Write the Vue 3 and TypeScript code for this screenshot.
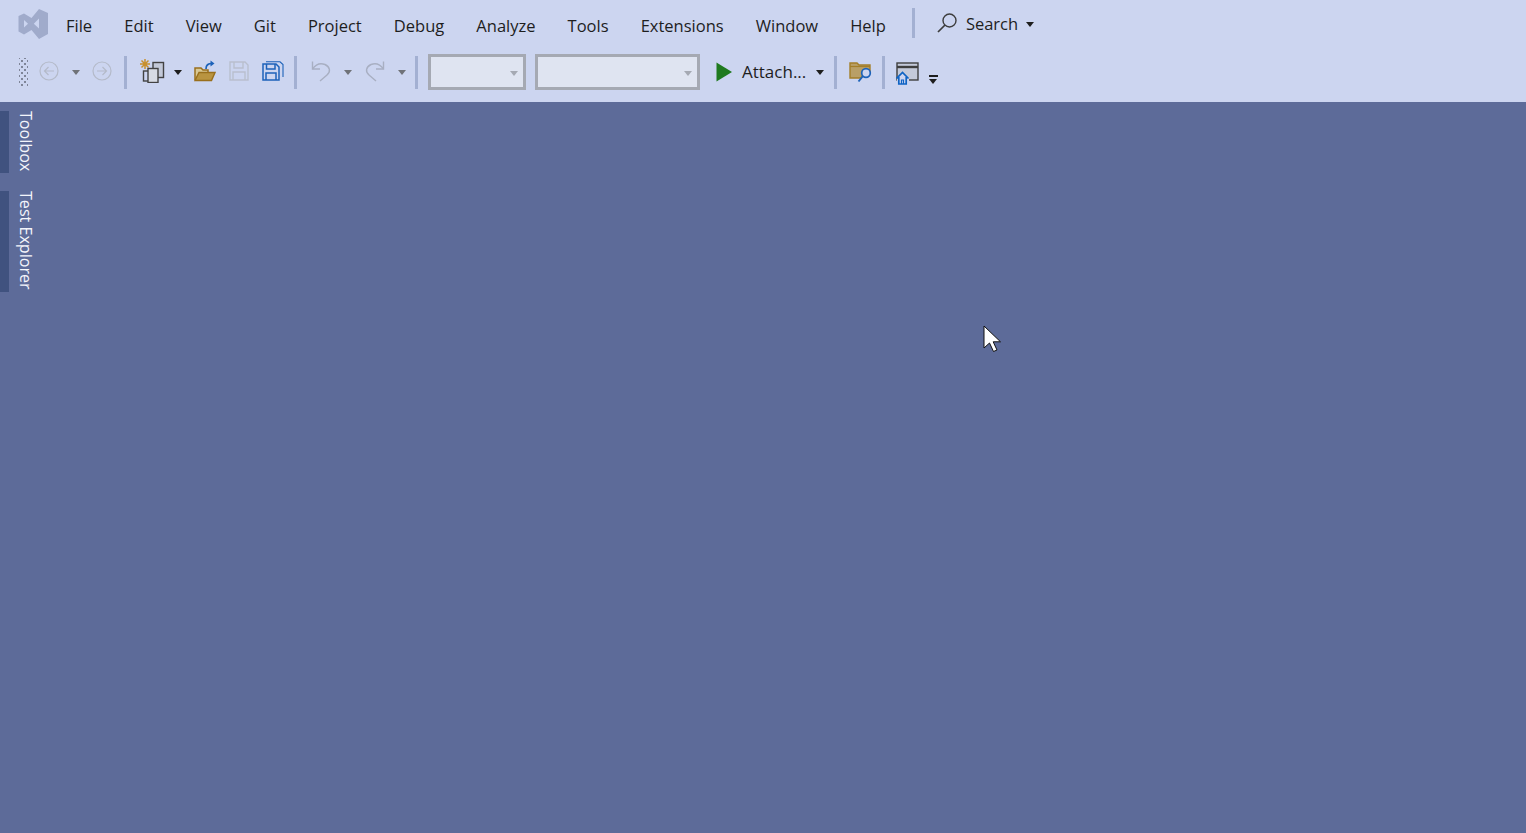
<script setup lang="ts">
const menuItems = ["File", "Edit", "View", "Git", "Project", "Debug", "Analyze", "Tools", "Extensions", "Window", "Help"];
const sideTabs = ["Toolbox", "Test Explorer"];
</script>

<template>
  <div class="shell">
    <header class="top">
      <div class="menu-row">
        <svg class="logo" width="32" height="32" viewBox="0 0 32 32">
          <path
            fill="#a0abcb"
            fill-rule="evenodd"
            d="M22 1 L31 5 V26 L22 31 L14.5 22 L7 26.500 L1.500 23.500 V8 L7 5.500 L14.5 10 Z M7 12 V19.500 L11 15.700 Z M22 10.500 L16.800 15.700 L22 20.500 Z"
          />
        </svg>
        <nav class="menu">
          <span v-for="item in menuItems" :key="item" class="menu-item">{{ item }}</span>
        </nav>
        <i class="sep menu-sep"></i>
        <svg class="search-icon" width="20" height="20" viewBox="0 0 20 20" fill="none">
          <circle cx="12.5" cy="7.500" r="6.500" stroke="#3d3d3d" stroke-width="1.400" />
          <path d="M8 12 L1 19" stroke="#3d3d3d" stroke-width="1.700" />
        </svg>
        <span class="search-label">Search</span>
        <i class="caret search-caret"></i>
      </div>

      <div class="tool-row">
        <div class="gripper"></div>

        <svg class="t-icon t-back" width="20" height="20" viewBox="0 0 20 20" fill="none" stroke="#b4bac9" stroke-width="1.200">
          <circle cx="10" cy="10" r="9" />
          <path d="M15 10 H5.500 M9.500 6 L5.500 10 L9.500 14" />
        </svg>
        <i class="caret caret-muted t-back-dd"></i>
        <svg class="t-icon t-fwd" width="20" height="20" viewBox="0 0 20 20" fill="none" stroke="#b4bac9" stroke-width="1.200">
          <circle cx="10" cy="10" r="9" />
          <path d="M5 10 H14.500 M10.500 6 L14.500 10 L10.500 14" />
        </svg>
        <i class="sep t-sep1"></i>

        <svg class="t-icon t-new" width="25" height="24" viewBox="0 0 25 24" fill="none">
          <g stroke="#c8902c" stroke-width="1.500">
            <path d="M5 0 V10 M0 5 H10 M1.500 1.500 L8.500 8.500 M8.500 1.500 L1.500 8.500" />
          </g>
          <rect x="13" y="3.500" width="10.500" height="15" fill="#c3c9d8" stroke="#424242" stroke-width="1.400" />
          <rect x="3.500" y="12" width="8" height="10" fill="#ccd5f0" stroke="#424242" stroke-width="1.400" />
          <rect x="8" y="9.500" width="10" height="14" fill="#d7dbe4" stroke="#424242" stroke-width="1.400" />
        </svg>
        <i class="caret t-new-dd"></i>
        <svg class="t-icon t-open" width="22" height="22" viewBox="0 0 22 22" fill="none">
          <path d="M1 20 V8 H7 L9 10 H14 V12" stroke="#996f1c" stroke-width="1.500" fill="#d9c894" />
          <path d="M1 20.500 L5 12.500 H21 L17.500 20.500 Z" fill="#b99440" stroke="#996f1c" stroke-width="1.400" />
          <path d="M12 9 C12 5 14 3.500 18 3.500" stroke="#1c62b9" stroke-width="1.700" />
          <path d="M16.500 0.500 L20.500 3.500 L16.500 6.500 Z" fill="#1c62b9" />
        </svg>
        <svg class="t-icon t-save" width="20" height="20" viewBox="0 0 20 20" fill="none" stroke="#b9bfce" stroke-width="1.400">
          <path d="M1 1 H16 L19 4 V19 H1 Z" />
          <path d="M5 1 V7 H14 V1 M4 19 V11 H16 V19" />
        </svg>
        <svg class="t-icon t-saveall" width="22" height="20" viewBox="0 0 22 20" fill="none" stroke="#1c62b9" stroke-width="1.500">
          <path d="M1 3 H14 L17 6 V19 H1 Z" />
          <path d="M4.500 3 V8 H13 V3 M4 19 V12 H14 V19" />
          <path d="M4 0.800 H18 L21 3.500 V16" stroke-width="1.100" />
        </svg>
        <i class="sep t-sep2"></i>

        <svg class="t-icon t-undo" width="20" height="22" viewBox="0 0 20 22" fill="none" stroke="#a8afc2" stroke-width="1.400">
          <path d="M1.500 1.500 V9 H9" />
          <path d="M1.500 9 C5 4 10 3 14 4.500 C19 7 20 11.500 16 15 L9 21" />
        </svg>
        <i class="caret caret-muted t-undo-dd"></i>
        <svg class="t-icon t-redo" width="20" height="22" viewBox="0 0 20 22" fill="none" stroke="#a8afc2" stroke-width="1.400">
          <path d="M18.500 1.500 V9 H11" />
          <path d="M18.500 9 C15 4 10 3 6 4.500 C1 7 0 11.500 4 15 L11 21" />
        </svg>
        <i class="caret caret-muted t-redo-dd"></i>
        <i class="sep t-sep3"></i>

        <div class="combo combo-small"><i class="caret caret-light"></i></div>
        <div class="combo combo-large"><i class="caret caret-light"></i></div>

        <svg class="t-play" width="16" height="20" viewBox="0 0 16 20">
          <path d="M0.500 0.500 L16 10 L0.500 19.500 Z" fill="#1f7a1f" />
        </svg>
        <span class="attach">Attach...</span>
        <i class="caret t-attach-dd"></i>
        <i class="sep t-sep4"></i>

        <svg class="t-folder" width="24" height="22" viewBox="0 0 24 22" fill="none">
          <path d="M1 2 H8 L10 4 H21 V12 H15 L12 17 H1 Z" fill="#b99f66" stroke="#a37e28" stroke-width="1.400" />
          <path d="M1 5.500 H21" stroke="#a37e28" stroke-width="1.200" />
          <circle cx="17" cy="12" r="4.300" fill="#ccd5f0" stroke="#1c62b9" stroke-width="1.700" />
          <path d="M14 15 L9.500 20.500" stroke="#1c62b9" stroke-width="1.900" />
        </svg>
        <i class="sep t-sep5"></i>

        <svg class="t-home" width="23" height="23" viewBox="0 0 23 23" fill="none">
          <rect x="1" y="1" width="21" height="17" fill="#c4cada" stroke="#3f3f3f" stroke-width="1.400" />
          <path d="M1 5 H22" stroke="#3f3f3f" stroke-width="2.400" />
          <path d="M7 11 L1 17 V22.500 H13 V17 Z" fill="#ccd5f0" />
          <path d="M0.500 16.500 L6.500 10.500 L12.500 16.500 M2.800 15 V22 H10.200 V15" stroke="#0e63c4" stroke-width="1.700" />
          <path d="M5.500 22 V18 H7.500 V22" stroke="#0e63c4" stroke-width="1.200" />
        </svg>
        <div class="overflow">
          <i class="overflow-bar"></i>
          <i class="caret"></i>
        </div>
      </div>
    </header>

    <main class="workspace">
      <aside class="side-tabs">
        <div v-for="tab in sideTabs" :key="tab" class="side-tab">
          <i class="side-mark"></i>
          <span class="side-label">{{ tab }}</span>
        </div>
      </aside>

      <svg class="cursor" width="19" height="28" viewBox="0 0 19 28">
        <path
          d="M1 1 V23 L6.500 18 L10.500 26.500 L14 25 L10.200 16.800 H17.500 Z"
          fill="#fff"
          stroke="#111"
          stroke-width="1"
        />
      </svg>
    </main>
  </div>
</template>

<style scoped>
.shell {
  display: flex;
  flex-direction: column;
  height: 833px;
  overflow: hidden;
  font-family: "Open Sans", "Noto Sans", sans-serif;
  color: #1e1e1e;
}

.top {
  height: 102px;
  background: #ccd5f0;
  flex: none;
}

.menu-row {
  display: flex;
  align-items: center;
  height: 48px;
}

.logo {
  margin-left: 17px;
  flex: none;
}

.menu {
  display: flex;
  gap: 32.1px;
  margin-left: 17px;
  padding-top: 4px;
}

.menu-item {
  font-size: 16.5px;
  line-height: 22px;
}

.sep {
  display: block;
  width: 3px;
  height: 33px;
  background: #a3b0d2;
  flex: none;
}

.menu-sep {
  height: 30px;
  margin: -3px 0 0 26px;
}

.search-icon {
  margin: -2px 0 0 22px;
}

.search-label {
  margin: 0 0 0 9px;
  font-size: 16.5px;
  line-height: 22px;
}

.search-caret {
  margin: 0 0 0 8px;
}

.caret {
  display: block;
  flex: none;
  width: 0;
  height: 0;
  border-left: 4.5px solid transparent;
  border-right: 4.5px solid transparent;
  border-top: 5px solid #1e1e1e;
}

.caret-muted {
  border-top-color: #6f7278;
}

.caret-light {
  border-top-color: #a5a9b3;
}

.tool-row {
  display: flex;
  align-items: center;
  height: 48px;
}

.gripper {
  width: 9px;
  height: 28px;
  margin-left: 19px;
  background-image:
    radial-gradient(circle, #7f8598 1.1px, transparent 1.4px),
    radial-gradient(circle, #7f8598 1.1px, transparent 1.4px);
  background-size: 6px 6px;
  background-position: 0 0, 3px 3px;
}

.t-icon {
  margin-top: -2px;
}

.t-back { margin-left: 11px; }
.t-back-dd { margin: 0 0 0 13px; }
.t-fwd { margin-left: 12px; }
.t-sep1 { margin-left: 12px; }
.t-new { margin-left: 13px; }
.t-new-dd { margin: 0 0 0 9px; }
.t-open { margin-left: 12px; }
.t-save { margin-left: 13px; }
.t-saveall { margin-left: 13px; }
.t-sep2 { margin-left: 10px; }
.t-undo { margin-left: 14px; }
.t-undo-dd { margin: 0 0 0 13px; }
.t-redo { margin-left: 13px; }
.t-redo-dd { margin: 0 0 0 13px; }
.t-sep3 { margin-left: 9px; }

.combo {
  display: flex;
  align-items: center;
  justify-content: flex-end;
  box-sizing: border-box;
  height: 36px;
  padding: 2px 5px 0 0;
  border: 3px solid #a5a9b3;
  background: #dfe4f1;
  flex: none;
}

.combo-small {
  width: 98px;
  margin-left: 10px;
}

.combo-large {
  width: 165px;
  margin-left: 9px;
}

.t-play { margin-left: 16px; }

.attach {
  margin-left: 10px;
  font-size: 17px;
  line-height: 22px;
}

.t-attach-dd { margin-left: 10px; }
.t-sep4 { margin-left: 10px; }
.t-folder { margin-left: 12px; }
.t-sep5 { margin-left: 9px; }
.t-home { margin: 2px 0 0 11px; }

.overflow {
  display: flex;
  flex-direction: column;
  gap: 2px;
  margin: 14px 0 0 10px;
}

.overflow-bar {
  display: block;
  width: 9px;
  height: 2px;
  background: #1e1e1e;
}

.workspace {
  position: relative;
  flex: 1;
  background: #5d6b99;
}

.side-tabs {
  display: flex;
  flex-direction: column;
  gap: 18px;
  padding-top: 9px;
}

.side-tab {
  display: flex;
  gap: 7.5px;
}

.side-mark {
  display: block;
  width: 9px;
  background: #40527f;
  flex: none;
}

.side-label {
  writing-mode: vertical-rl;
  padding-bottom: 2px;
  font-size: 16.1px;
  line-height: 17px;
  color: #f4f5fb;
}

.cursor {
  position: absolute;
  left: 983px;
  top: 223px;
}
</style>
